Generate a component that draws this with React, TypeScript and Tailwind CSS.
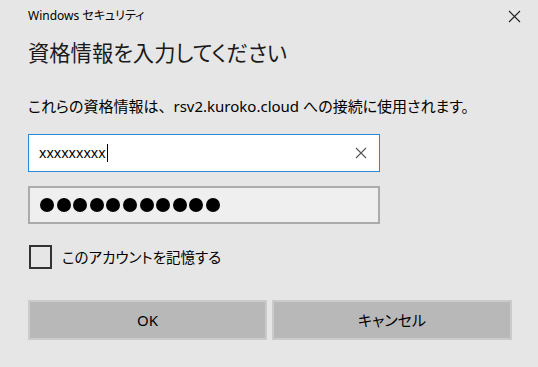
import React from "react";

const font = { fontFamily: '"Noto Sans", "Noto Sans CJK JP", sans-serif' };

export default function App() {
  return (
    <div
      className="w-[538px] h-[367px] bg-[#e6e6e6] text-black flex flex-col pl-[28px] [font-feature-settings:'palt']"
      style={font}
    >
      <div className="h-[32px] flex items-center justify-between pr-[17px]">
        <span className="text-[12px] leading-none">Windows セキュリティ</span>
        <svg width="13" height="13" viewBox="0 0 13 13" className="text-[#222]">
          <path d="M1 1 L12 12 M12 1 L1 12" stroke="currentColor" strokeWidth="1.1" />
        </svg>
      </div>
      <div className="mt-[6px] h-[30px] flex items-center text-[21.3px] leading-none text-[#1a1a1a]">
        資格情報を入力してください
      </div>
      <div className="mt-[28px] h-[20px] flex items-center text-[15px] leading-none whitespace-pre">
        これらの資格情報は<span className="[font-feature-settings:normal]">、</span>rsv2.kuroko.cloud への接続に使用されます。
      </div>
      <div className="mt-[18px] w-[352px] h-[38px] bg-white border border-[#2a87d8] flex items-center pl-[10px] pr-[12px]">
        <span className="text-[14px] leading-none">xxxxxxxxx</span>
        <span className="w-[1px] h-[18px] bg-black ml-[1px]" />
        <span className="flex-1" />
        <svg width="12" height="12" viewBox="0 0 12 12" className="text-[#555]">
          <path d="M1 1 L11 11 M11 1 L1 11" stroke="currentColor" strokeWidth="1.1" />
        </svg>
      </div>
      <div className="mt-[14px] w-[352px] h-[38px] bg-[#efefef] border-2 border-[#ababab] flex items-center pl-[10px] gap-[2.6px]">
        {Array.from({ length: 11 }).map((_, i) => (
          <span key={i} className="w-[14px] h-[14px] rounded-full bg-black" />
        ))}
      </div>
      <div className="mt-[21px] h-[24px] flex items-center">
        <span className="ml-[1px] w-[23px] h-[24px] border-2 border-[#333333] bg-[#e6e6e6]" />
        <span className="ml-[10px] text-[14.5px] leading-none">このアカウントを記憶する</span>
      </div>
      <div className="mt-[31px] flex gap-[5px]">
        <div className="w-[239px] h-[40px] bg-[#b8b8b8] border-2 border-[#cbcbcb] flex items-center justify-center text-[15px]">
          OK
        </div>
        <div className="w-[240px] h-[40px] bg-[#b8b8b8] border-2 border-[#cbcbcb] flex items-center justify-center text-[15px]">
          キャンセル
        </div>
      </div>
    </div>
  );
}
